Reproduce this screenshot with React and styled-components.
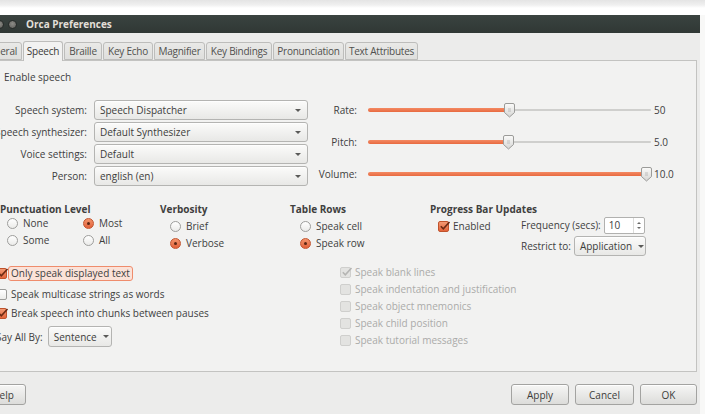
import React from 'react'
import styled, { createGlobalStyle } from 'styled-components'

const GlobalStyle = createGlobalStyle`
  html, body { margin: 0; padding: 0; }
  body {
    background: #f8f8f7;
    font-family: "Open Sans", "DejaVu Sans", sans-serif;
    font-size: 10px;
    color: #40403e;
  }
`

const Page = styled.div`
  width: 705px;
  height: 414px;
  overflow: hidden;
  background: #f8f8f7;
`

const TopStrip = styled.div`
  height: 15px;
  background: linear-gradient(#e4e4e4 0, #f0f0f0 5px, #ffffff 8px, #ffffff 100%);
`

const Window = styled.div`
  margin-left: -30px;
  width: 730px;
  height: 399px;
  background: #ececeb;
  display: flex;
  flex-direction: column;
`

const TitleBar = styled.div`
  height: 18px;
  flex: none;
  background: linear-gradient(#3a4340, #303835);
  display: flex;
  align-items: center;
  padding-left: 25px;
  gap: 4px;
`

const WinButton = styled.span`
  width: 9px;
  height: 9px;
  border-radius: 50%;
  background: radial-gradient(circle at 50% 40%, #8c8c87, #5c5c58);
  border: 1px solid #262b29;
  box-sizing: border-box;
`

const Title = styled.span`
  margin-left: 5px;
  color: #e2dfd8;
  font-weight: 700;
  font-size: 10px;
`

const Body = styled.div`
  flex: 1;
  padding: 8px 3px 0 6px;
  display: flex;
  flex-direction: column;
`

const TabStrip = styled.div`
  display: flex;
  align-items: flex-end;
  height: 19px;
  padding-left: 4px;
  position: relative;
  z-index: 1;
`

const Tab = styled.div`
  box-sizing: border-box;
  flex: none;
  width: ${({ $w }) => $w}px;
  height: ${({ $active }) => ($active ? 20 : 18)}px;
  margin-bottom: ${({ $active }) => ($active ? -1 : 0)}px;
  margin-right: 1px;
  border: 1px solid #bdbdbb;
  border-bottom: ${({ $active }) => ($active ? 'none' : '1px solid #bdbdbb')};
  border-radius: 3px 3px 0 0;
  background: ${({ $active }) =>
    $active ? '#f2f2f1' : 'linear-gradient(#e9e9e7, #dfdfdd)'};
  display: flex;
  align-items: center;
  justify-content: ${({ $clip }) => ($clip ? 'flex-end' : 'center')};
  padding-right: ${({ $clip }) => ($clip ? 4 : 0)}px;
  padding-bottom: ${({ $active }) => ($active ? 2 : 0)}px;
  white-space: nowrap;
  letter-spacing: -0.25px;
  color: ${({ $active }) => ($active ? '#3a3a38' : '#50504e')};
`

const Panel = styled.div`
  box-sizing: border-box;
  height: 312px;
  border: 1px solid #c3c3c1;
  background: #f2f2f1;
  padding: 9px 0 0 13px;
  display: flex;
  flex-direction: column;
`

const CheckRow = styled.div`
  display: flex;
  align-items: center;
  gap: ${({ $gap }) => $gap ?? 4}px;
  height: 14px;
  margin-left: ${({ $indent }) => $indent ?? 0}px;
  margin-top: ${({ $mt }) => $mt ?? 0}px;
  white-space: nowrap;
  color: ${({ $disabled }) => ($disabled ? '#ababa9' : 'inherit')};
`

const Box = styled.span`
  position: relative;
  flex: none;
  box-sizing: border-box;
  width: 11px;
  height: 11px;
  border-radius: 2px;
  border: 1px solid
    ${({ $checked, $disabled }) =>
      $disabled ? '#cfcfcd' : $checked ? '#c0532c' : '#9c9c9a'};
  background: ${({ $checked, $disabled }) =>
    $disabled
      ? '#e3e3e1'
      : $checked
      ? 'linear-gradient(#f39a74, #e3643a)'
      : 'linear-gradient(#ffffff, #ececea)'};
  svg {
    position: absolute;
    left: 0px;
    top: -2px;
  }
`

const Checkbox = ({ checked, disabled }) => (
  <Box $checked={checked} $disabled={disabled}>
    {checked && (
      <svg width="12" height="12" viewBox="0 0 12 12">
        <path
          d="M1.8 6.2 L4.3 8.8 L10.5 2"
          fill="none"
          stroke={disabled ? '#b5b5b3' : '#6b2a14'}
          strokeWidth="1.6"
        />
      </svg>
    )}
  </Box>
)

const Focused = styled.span`
  border: 1px solid #ef8c6c;
  background: #fbe2d8;
  border-radius: 3px;
  padding: 0 2px;
  margin-left: -3px;
  line-height: 13px;
`

const TopArea = styled.div`
  display: flex;
  margin-top: 16px;
`

const VoiceGrid = styled.div`
  display: grid;
  grid-template-columns: 97px 214px;
  grid-auto-rows: 20px;
  column-gap: 7px;
  row-gap: 2px;
  align-items: center;
`

/* right-aligned label; long text spills to the left */
const FieldLabel = styled.div`
  display: flex;
  justify-content: flex-end;
  width: ${({ $w }) => ($w ? `${$w}px` : 'auto')};
  flex: none;
  white-space: nowrap;
`

const Combo = styled.div`
  box-sizing: border-box;
  height: ${({ $h }) => $h ?? 20}px;
  width: ${({ $w }) => ($w ? `${$w}px` : 'auto')};
  border: 1px solid #b4b4b2;
  border-radius: 3px;
  background: linear-gradient(#fbfbfa, #e8e8e6);
  box-shadow: 0 1px 0 rgba(255, 255, 255, 0.8) inset;
  display: flex;
  align-items: center;
  justify-content: space-between;
  padding: 0 6px 0 5px;
  white-space: nowrap;
  color: #3d3d3b;
`

const Arrow = styled.span`
  width: 0;
  height: 0;
  border-left: 3px solid transparent;
  border-right: 3px solid transparent;
  border-top: 3px solid #5a5a58;
  margin-left: 6px;
`

const SliderGrid = styled.div`
  margin-left: 8px;
  display: flex;
  flex-direction: column;
  gap: 12px;
`

const SliderRow = styled.div`
  display: flex;
  align-items: center;
  height: 20px;
`

const Track = styled.div`
  position: relative;
  width: 283px;
  height: 20px;
  margin-left: 11px;
  &::before {
    content: '';
    position: absolute;
    left: 0;
    right: 0;
    top: 9px;
    height: 2px;
    background: #cfcfcd;
    border-radius: 1px;
  }
`

const Fill = styled.div`
  position: absolute;
  left: 0;
  top: 8px;
  height: 4px;
  border-radius: 2px;
  background: linear-gradient(#f48a63, #e86a40);
`

const Thumb = styled.svg`
  position: absolute;
  top: 3px;
`

const SliderValue = styled.span`
  margin-left: 3px;
`

const Slider = ({ label, value, frac }) => {
  const center = 5 + frac * 273
  return (
    <SliderRow>
      <FieldLabel $w={41}>{label}</FieldLabel>
      <Track>
        <Fill style={{ width: center }} />
        <Thumb width="11" height="15" viewBox="0 0 11 15" style={{ left: center - 5.5 }}>
          <defs>
            <linearGradient id="thumbShade" x1="0" x2="0" y1="0" y2="1">
              <stop offset="0" stopColor="#fbfbfa" />
              <stop offset="1" stopColor="#d6d6d4" />
            </linearGradient>
          </defs>
          <path
            d="M2 0.5 H9 A1.5 1.5 0 0 1 10.5 2 V9.5 L5.5 14 L0.5 9.5 V2 A1.5 1.5 0 0 1 2 0.5 Z"
            fill="url(#thumbShade)"
            stroke="#9b9b99"
          />
          <path d="M4 6 H7 M4 8 H7" stroke="#b3b3b1" strokeWidth="0.8" />
        </Thumb>
      </Track>
      <SliderValue>{value}</SliderValue>
    </SliderRow>
  )
}

const Groups = styled.div`
  display: flex;
  margin-top: 16px;
  margin-left: 10px;
`

const Group = styled.div`
  width: ${({ $w }) => ($w ? `${$w}px` : 'auto')};
  display: flex;
  flex-direction: column;
`

const GroupTitle = styled.div`
  height: 14px;
  line-height: 14px;
  font-weight: 700;
  white-space: nowrap;
`

const RadioGrid = styled.div`
  display: grid;
  grid-template-columns: repeat(${({ $cols }) => $cols ?? 1}, 76px);
  grid-auto-rows: 14px;
  row-gap: 3px;
  padding-left: ${({ $indent }) => $indent}px;
  margin-top: ${({ $mt }) => $mt ?? 0}px;
`

const RadioOption = styled.div`
  display: flex;
  align-items: center;
  gap: 5px;
  white-space: nowrap;
`

const Dot = styled.span`
  position: relative;
  flex: none;
  box-sizing: border-box;
  width: 11px;
  height: 11px;
  border-radius: 50%;
  border: 1px solid ${({ $on }) => ($on ? '#c25530' : '#9e9e9c')};
  background: ${({ $on }) =>
    $on ? 'linear-gradient(#f3946c, #e2613a)' : 'linear-gradient(#ffffff, #ebebe9)'};
  &::after {
    content: '';
    display: ${({ $on }) => ($on ? 'block' : 'none')};
    position: absolute;
    left: 3px;
    top: 3px;
    width: 3px;
    height: 3px;
    border-radius: 50%;
    background: #5b2613;
  }
`

const Radio = ({ on, children }) => (
  <RadioOption>
    <Dot $on={on} />
    {children}
  </RadioOption>
)

const ProgressBody = styled.div`
  display: grid;
  grid-template-columns: 83px auto;
  padding-left: 8px;
`

const ProgressFields = styled.div`
  display: flex;
  flex-direction: column;
  gap: 2px;
`

const FieldRow = styled.div`
  display: flex;
  align-items: center;
  gap: 3px;
  height: ${({ $h }) => $h}px;
  white-space: nowrap;
`

const Spin = styled.div`
  box-sizing: border-box;
  width: 41px;
  height: 17px;
  border: 1px solid #b1b1af;
  border-radius: 2px;
  background: #ffffff;
  display: flex;
  align-items: center;
  justify-content: space-between;
  padding-left: 4px;
`

const Stepper = styled.div`
  width: 10px;
  height: 100%;
  border-left: 1px solid #dcdcda;
  display: flex;
  flex-direction: column;
  align-items: center;
  justify-content: center;
  gap: 3px;
`

const StepArrow = styled.span`
  width: 0;
  height: 0;
  border-left: 2px solid transparent;
  border-right: 2px solid transparent;
  border-${({ $up }) => ($up ? 'bottom' : 'top')}: 2px solid #6a6a68;
`

const Lower = styled.div`
  display: flex;
  margin-top: 7px;
  margin-left: 6px;
`

const LeftChecks = styled.div`
  width: 344px;
  display: flex;
  flex-direction: column;
`

const RightChecks = styled.div`
  display: flex;
  flex-direction: column;
  gap: 3px;
  padding-top: 2px;
`

const SayAllRow = styled.div`
  display: flex;
  align-items: center;
  gap: 5px;
  margin-top: 6px;
  white-space: nowrap;
`

const ButtonBar = styled.div`
  display: flex;
  padding-top: 12px;
  padding-left: 4px;
  gap: 6px;
`

const Button = styled.div`
  box-sizing: border-box;
  flex: none;
  width: ${({ $w }) => $w}px;
  height: 21px;
  margin-left: ${({ $push }) => ($push ? 'auto' : '0')};
  border: 1px solid #a3a3a1;
  border-radius: 3px;
  background: linear-gradient(#f6f6f5, #dcdcda);
  box-shadow: 0 1px 0 rgba(255, 255, 255, 0.9) inset;
  display: flex;
  align-items: center;
  justify-content: center;
  color: #3d3d3b;
`

const tabs = [
  { name: 'General', w: 42, clip: true },
  { name: 'Speech', w: 40, active: true },
  { name: 'Braille', w: 38 },
  { name: 'Key Echo', w: 50 },
  { name: 'Magnifier', w: 51 },
  { name: 'Key Bindings', w: 66 },
  { name: 'Pronunciation', w: 71 },
  { name: 'Text Attributes', w: 73 },
]

const voiceFields = [
  ['Speech system:', 'Speech Dispatcher'],
  ['Speech synthesizer:', 'Default Synthesizer'],
  ['Voice settings:', 'Default'],
  ['Person:', 'english (en)'],
]

const textOptions = [
  { label: 'Speak blank lines', checked: true },
  { label: 'Speak indentation and justification' },
  { label: 'Speak object mnemonics' },
  { label: 'Speak child position' },
  { label: 'Speak tutorial messages' },
]

export default function App() {
  return (
    <>
      <GlobalStyle />
      <Page>
        <TopStrip />
        <Window>
          <TitleBar>
            <WinButton />
            <WinButton />
            <Title>Orca Preferences</Title>
          </TitleBar>
          <Body>
            <TabStrip>
              {tabs.map((t) => (
                <Tab key={t.name} $w={t.w} $active={t.active} $clip={t.clip}>
                  {t.name}
                </Tab>
              ))}
            </TabStrip>
            <Panel>
              <CheckRow $gap={5} $indent={-2}>
                <Checkbox checked />
                Enable speech
              </CheckRow>

              <TopArea>
                <VoiceGrid>
                  {voiceFields.map(([label, value]) => (
                    <React.Fragment key={label}>
                      <FieldLabel>{label}</FieldLabel>
                      <Combo>
                        {value}
                        <Arrow />
                      </Combo>
                    </React.Fragment>
                  ))}
                </VoiceGrid>
                <SliderGrid>
                  <Slider label="Rate:" value="50" frac={0.5} />
                  <Slider label="Pitch:" value="5.0" frac={0.497} />
                  <Slider label="Volume:" value="10.0" frac={1} />
                </SliderGrid>
              </TopArea>

              <Groups>
                <Group $w={160}>
                  <GroupTitle>Punctuation Level</GroupTitle>
                  <RadioGrid $cols={2} $indent={7}>
                    <Radio>None</Radio>
                    <Radio on>Most</Radio>
                    <Radio>Some</Radio>
                    <Radio>All</Radio>
                  </RadioGrid>
                </Group>
                <Group $w={130}>
                  <GroupTitle>Verbosity</GroupTitle>
                  <RadioGrid $indent={10} $mt={3}>
                    <Radio>Brief</Radio>
                    <Radio on>Verbose</Radio>
                  </RadioGrid>
                </Group>
                <Group $w={140}>
                  <GroupTitle>Table Rows</GroupTitle>
                  <RadioGrid $indent={10} $mt={3}>
                    <Radio>Speak cell</Radio>
                    <Radio on>Speak row</Radio>
                  </RadioGrid>
                </Group>
                <Group>
                  <GroupTitle>Progress Bar Updates</GroupTitle>
                  <ProgressBody>
                    <CheckRow $mt={3}>
                      <Checkbox checked />
                      Enabled
                    </CheckRow>
                    <ProgressFields>
                      <FieldRow $h={18}>
                        Frequency (secs):
                        <Spin>
                          10
                          <Stepper>
                            <StepArrow $up />
                            <StepArrow />
                          </Stepper>
                        </Spin>
                      </FieldRow>
                      <FieldRow $h={20}>
                        Restrict to:
                        <Combo $w={72}>
                          Application
                          <Arrow />
                        </Combo>
                      </FieldRow>
                    </ProgressFields>
                  </ProgressBody>
                </Group>
              </Groups>

              <Lower>
                <LeftChecks>
                  <CheckRow $mt={3}>
                    <Checkbox checked />
                    <Focused>Only speak displayed text</Focused>
                  </CheckRow>
                  <CheckRow $mt={7}>
                    <Checkbox />
                    Speak multicase strings as words
                  </CheckRow>
                  <CheckRow $mt={5}>
                    <Checkbox checked />
                    Break speech into chunks between pauses
                  </CheckRow>
                  <SayAllRow>
                    Say All By:
                    <Combo $w={64} $h={21}>
                      Sentence
                      <Arrow />
                    </Combo>
                  </SayAllRow>
                </LeftChecks>
                <RightChecks>
                  {textOptions.map((o) => (
                    <CheckRow key={o.label} $disabled>
                      <Checkbox checked={o.checked} disabled />
                      {o.label}
                    </CheckRow>
                  ))}
                </RightChecks>
              </Lower>
            </Panel>
            <ButtonBar>
              <Button $w={46}>Help</Button>
              <Button $w={58} $push>Apply</Button>
              <Button $w={59}>Cancel</Button>
              <Button $w={57}>OK</Button>
            </ButtonBar>
          </Body>
        </Window>
      </Page>
    </>
  )
}
